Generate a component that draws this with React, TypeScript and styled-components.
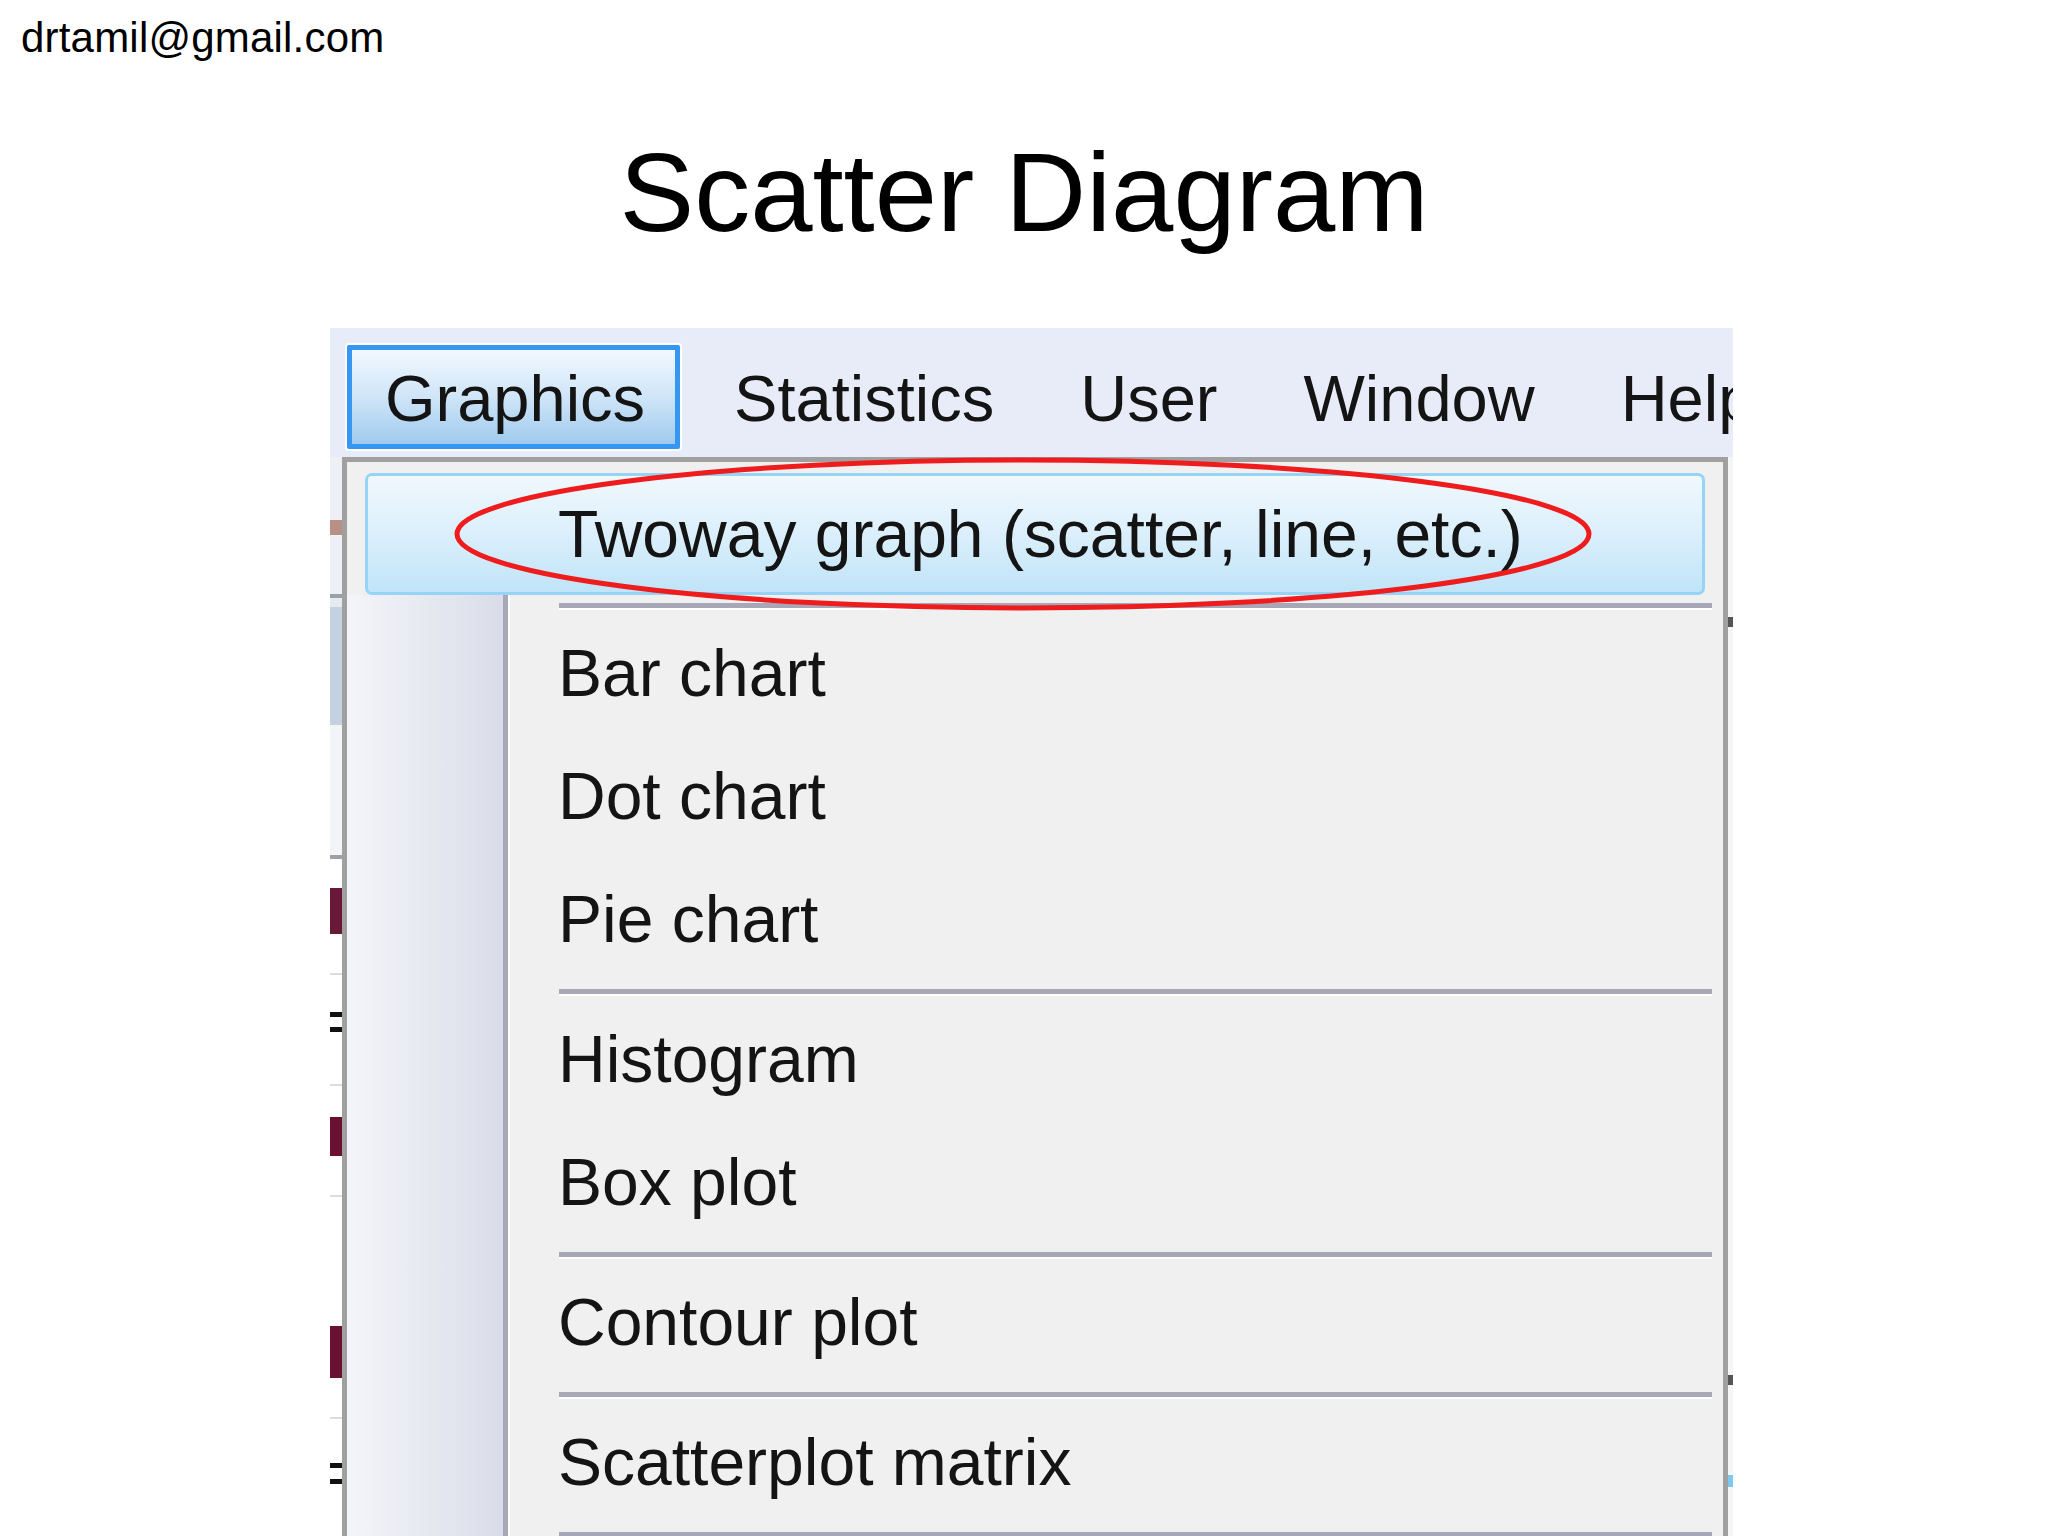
import styled, { createGlobalStyle } from 'styled-components';

const GlobalStyle = createGlobalStyle`
    html, body {
        margin: 0;
        padding: 0;
        background: #fff;
    }
    body {
        width: 2048px;
        height: 1536px;
        overflow: hidden;
        font-family: "Liberation Sans", Arial, sans-serif;
        color: #000;
    }
`;

const Page = styled.div`
    width: 2048px;
    height: 1536px;
    padding-top: 17px;
    box-sizing: border-box;
    display: flex;
    flex-direction: column;
    overflow: hidden;
`;

const Email = styled.div`
    margin-left: 21px;
    font-size: 42px;
    line-height: 42px;
    letter-spacing: 0.2px;
`;

const Title = styled.h1`
    margin: 78px 0 0;
    font-weight: normal;
    font-size: 112px;
    line-height: 112px;
    text-align: center;
`;

const Shot = styled.div`
    margin: 79px 0 0 330px;
    width: 1403px;
    flex: 1;
    display: flex;
    flex-direction: column;
    overflow: hidden;
`;

const MenuBar = styled.div`
    height: 129px;
    flex-shrink: 0;
    box-sizing: border-box;
    padding: 17px 0 0 17px;
    background: #e8ebf8;
    display: flex;
    align-items: flex-start;
    white-space: nowrap;
    overflow: hidden;
`;

const MenuItem = styled.div<{ $active?: boolean }>`
    flex-shrink: 0;
    box-sizing: border-box;
    height: 104px;
    border: 5px solid transparent;
    padding: 3px 38px 0;
    font-size: 65px;
    line-height: 91px;
    color: #141414;

    ${({ $active }) => $active && `
        border-color: #3697f2;
        border-radius: 2px;
        padding: 3px 30px 0 33px;
        margin-right: 11px;
        background: linear-gradient(180deg, #f2f8fe 0%, #cfe5f8 50%, #9fcaee 100%);
        box-shadow: 0 0 0 2px #fff;
    `}
`;

const Lower = styled.div`
    flex: 1;
    display: flex;
    min-height: 0;
`;

const BackStrip = styled.div`
    width: 12px;
    flex-shrink: 0;
    display: flex;
    flex-direction: column;
    background: #fff;
`;

const Frag = styled.div<{ $h: number; $c: string }>`
    height: ${({ $h }) => $h}px;
    flex-shrink: 0;
    background: ${({ $c }) => $c};
`;

const Dropdown = styled.div`
    width: 1386px;
    flex-shrink: 0;
    box-sizing: border-box;
    border: 5px solid #a0a0a0;
    border-bottom: none;
    background: #f0f0f0;
    padding-top: 11px;
    display: flex;
    flex-direction: column;
`;

const RightSliver = styled.div`
    width: 5px;
    flex-shrink: 0;
    display: flex;
    flex-direction: column;
    background: #f5f5f5;
`;

const Highlight = styled.div`
    position: relative;
    margin: 0 18px;
    height: 122px;
    box-sizing: border-box;
    border: 3px solid #97d3f5;
    border-radius: 7px;
    background: linear-gradient(180deg, #f0f8fd 0%, #dbeffb 50%, #c0e4f8 100%);
    padding-left: 190px;
    font-size: 66px;
    line-height: 116px;
    color: #141414;
    white-space: nowrap;
`;

const Ring = styled.svg`
    position: absolute;
    left: 84px;
    top: -21px;
    overflow: visible;
    pointer-events: none;
`;

const MenuBody = styled.div`
    flex: 1;
    background: linear-gradient(90deg,
        #f4f5f9 0px,
        #dadde9 156px,
        #a8a7b8 156px,
        #a8a7b8 161px,
        #ffffff 161px,
        #ffffff 163px,
        #f0f0f0 163px);
`;

const Separator = styled.div`
    height: 17px;
    box-sizing: border-box;
    padding: 8px 11px 0 212px;

    &::before {
        content: '';
        display: block;
        height: 5px;
        background: #a8a7b8;
        border-bottom: 2px solid #fff;
    }
`;

const Item = styled.div`
    height: 123px;
    padding-left: 211px;
    font-size: 66px;
    line-height: 123px;
    color: #141414;
    white-space: nowrap;
`;

// bits of the window behind the menu, top to bottom: [height, colour]
const backBits: [number, string][] = [
    [63, '#eef0f6'], [15, '#b89088'], [59, '#eef0f6'], [4, '#98a0aa'],
    [9, '#e6eaf1'], [118, '#c3d1e1'], [130, '#f3f4f7'], [4, '#a0a0a0'],
    [29, '#fff'], [46, '#6a1838'], [39, '#fff'], [2, '#dcdcdc'],
    [37, '#fff'], [5, '#111'], [10, '#fff'], [5, '#111'],
    [52, '#fff'], [2, '#dcdcdc'], [31, '#fff'], [39, '#6a1030'],
    [39, '#fff'], [2, '#dcdcdc'], [129, '#fff'], [52, '#6a1030'],
    [39, '#fff'], [2, '#dcdcdc'], [44, '#fff'], [5, '#111'],
    [11, '#fff'], [5, '#111'],
];

const sliverBits: [number, string][] = [
    [160, '#f5f5f5'], [10, '#555'], [748, '#f5f5f5'], [10, '#555'],
    [90, '#f5f5f5'], [12, '#7cc8ee'],
];

const menus = ['Statistics', 'User', 'Window', 'Help'];

const groups = [
    ['Bar chart', 'Dot chart', 'Pie chart'],
    ['Histogram', 'Box plot'],
    ['Contour plot'],
    ['Scatterplot matrix'],
];

const App = () => (
    <>
        <GlobalStyle />
        <Page>
            <Email>drtamil@gmail.com</Email>
            <Title>Scatter Diagram</Title>
            <Shot>
                <MenuBar>
                    <MenuItem $active>Graphics</MenuItem>
                    {menus.map((m) => <MenuItem key={m}>{m}</MenuItem>)}
                </MenuBar>
                <Lower>
                    <BackStrip>
                        {backBits.map(([h, c], i) => <Frag key={i} $h={h} $c={c} />)}
                    </BackStrip>
                    <Dropdown>
                        <Highlight>
                            Twoway graph (scatter, line, etc.)
                            <Ring width="1142" height="158" viewBox="0 0 1142 158">
                                <ellipse cx="571" cy="79" rx="566" ry="74" fill="none" stroke="#ee1c1c" strokeWidth="5" />
                            </Ring>
                        </Highlight>
                        <MenuBody>
                            {groups.map((g, i) => (
                                <div key={i}>
                                    <Separator />
                                    {g.map((label) => <Item key={label}>{label}</Item>)}
                                </div>
                            ))}
                            <Separator />
                        </MenuBody>
                    </Dropdown>
                    <RightSliver>
                        {sliverBits.map(([h, c], i) => <Frag key={i} $h={h} $c={c} />)}
                    </RightSliver>
                </Lower>
            </Shot>
        </Page>
    </>
);

export default App;
